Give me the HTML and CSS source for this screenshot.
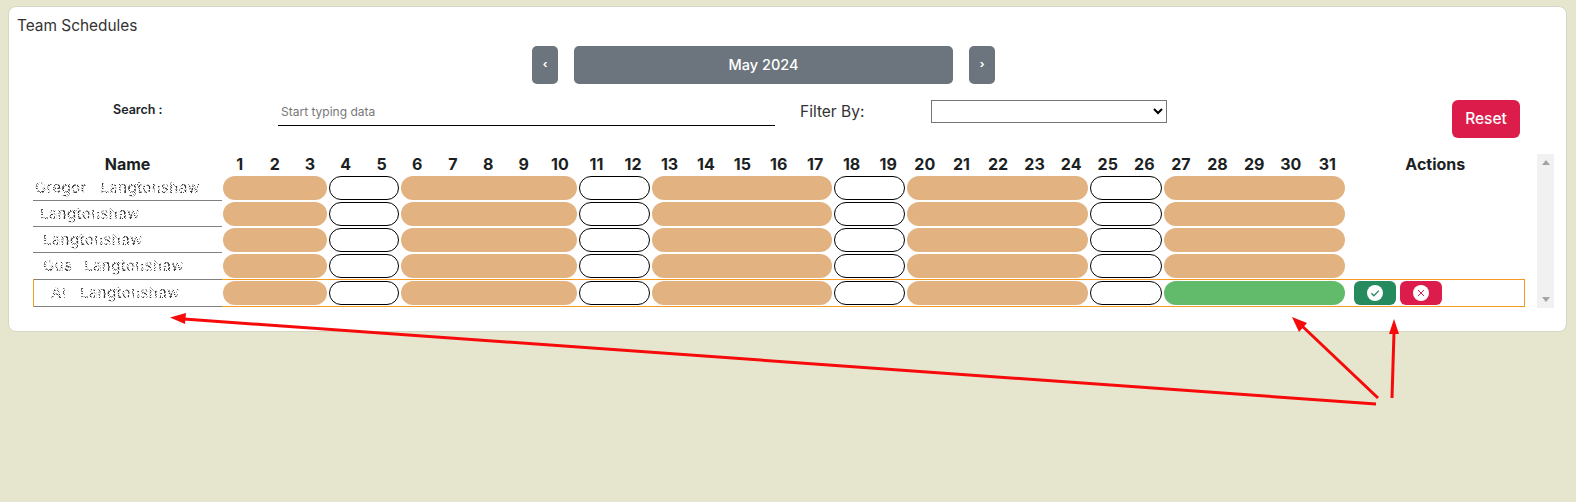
FILE: index.html
```html
<!DOCTYPE html>
<html lang="en">
<head>
  <meta charset="UTF-8">
  <meta name="viewport" content="width=device-width, initial-scale=1.0">
  <title>Team Schedules</title>
  <link rel="stylesheet" href="styles.css">
</head>
<body>
  <!-- dotted noise used on the redacted names -->
  <svg class="defs" width="0" height="0" aria-hidden="true">
    <filter id="speckle" x="0" y="0" width="100%" height="100%">
      <feMorphology in="SourceGraphic" operator="dilate" radius="0.4" result="fat"/>
      <feTurbulence type="fractalNoise" baseFrequency="1.3" numOctaves="1" seed="7" result="noise"/>
      <feColorMatrix in="noise" type="matrix" values="0 0 0 0 0  0 0 0 0 0  0 0 0 0 0  0 0 0 -10 5.4" result="dots"/>
      <feComposite in="fat" in2="dots" operator="in"/>
    </filter>
  </svg>

  <div class="card">
    <div class="card-title">Team Schedules</div>

    <div class="month-nav">
      <button class="btn-gray btn-step">&#8249;</button>
      <button class="btn-gray btn-month">May 2024</button>
      <button class="btn-gray btn-step">&#8250;</button>
    </div>

    <div class="filters">
      <label class="search-label">Search :</label>
      <input class="search-input" type="text" placeholder="Start typing data">
      <label class="filter-label">Filter By:</label>
      <select class="filter-select"><option></option></select>
      <button class="btn-reset">Reset</button>
    </div>

    <div class="schedule">
      <div class="schedule-table">
        <div class="sched-row head-row">
          <div class="head-name">Name</div>
          <div>1</div><div>2</div><div>3</div><div>4</div><div>5</div><div>6</div><div>7</div><div>8</div>
          <div>9</div><div>10</div><div>11</div><div>12</div><div>13</div><div>14</div><div>15</div><div>16</div>
          <div>17</div><div>18</div><div>19</div><div>20</div><div>21</div><div>22</div><div>23</div><div>24</div>
          <div>25</div><div>26</div><div>27</div><div>28</div><div>29</div><div>30</div><div>31</div>
          <div>Actions</div>
        </div>

        <div class="sched-row first-row">
          <div class="name-cell name-a"><span class="blur-name">Gregor</span><span class="blur-name gap-a">Langtonshaw</span></div>
          <div class="pill work span-3"></div>
          <div class="pill off span-2"></div>
          <div class="pill work span-5"></div>
          <div class="pill off span-2"></div>
          <div class="pill work span-5"></div>
          <div class="pill off span-2"></div>
          <div class="pill work span-5"></div>
          <div class="pill off span-2"></div>
          <div class="pill work span-5"></div>
        </div>

        <div class="sched-row">
          <div class="name-cell name-b"><span class="blur-name">Langtonshaw</span></div>
          <div class="pill work span-3"></div>
          <div class="pill off span-2"></div>
          <div class="pill work span-5"></div>
          <div class="pill off span-2"></div>
          <div class="pill work span-5"></div>
          <div class="pill off span-2"></div>
          <div class="pill work span-5"></div>
          <div class="pill off span-2"></div>
          <div class="pill work span-5"></div>
        </div>

        <div class="sched-row">
          <div class="name-cell name-c"><span class="blur-name">Langtonshaw</span></div>
          <div class="pill work span-3"></div>
          <div class="pill off span-2"></div>
          <div class="pill work span-5"></div>
          <div class="pill off span-2"></div>
          <div class="pill work span-5"></div>
          <div class="pill off span-2"></div>
          <div class="pill work span-5"></div>
          <div class="pill off span-2"></div>
          <div class="pill work span-5"></div>
        </div>

        <div class="sched-row">
          <div class="name-cell name-c"><span class="blur-name">Gus</span><span class="blur-name gap-b">Langtonshaw</span></div>
          <div class="pill work span-3"></div>
          <div class="pill off span-2"></div>
          <div class="pill work span-5"></div>
          <div class="pill off span-2"></div>
          <div class="pill work span-5"></div>
          <div class="pill off span-2"></div>
          <div class="pill work span-5"></div>
          <div class="pill off span-2"></div>
          <div class="pill work span-5"></div>
        </div>

        <div class="sched-row selected">
          <div class="name-cell name-d"><span class="blur-name">Al</span><span class="blur-name gap-c">Langtonshaw</span></div>
          <div class="pill work span-3"></div>
          <div class="pill off span-2"></div>
          <div class="pill work span-5"></div>
          <div class="pill off span-2"></div>
          <div class="pill work span-5"></div>
          <div class="pill off span-2"></div>
          <div class="pill work span-5"></div>
          <div class="pill off span-2"></div>
          <div class="pill approved span-5"></div>
          <div class="actions">
            <button class="btn-action btn-approve">
              <svg width="16" height="16" viewBox="0 0 16 16"><circle cx="8" cy="8" r="8" fill="#fff"/><path d="M4.4 8.300l2.500 2.500 4.900-5.200" fill="none" stroke="#258a5d" stroke-width="1.300"/></svg>
            </button>
            <button class="btn-action btn-reject">
              <svg width="16" height="16" viewBox="0 0 16 16"><circle cx="8" cy="8" r="8" fill="#fff"/><path d="M5 5l6 6M11 5l-6 6" fill="none" stroke="#dc1c4a" stroke-width="1"/></svg>
            </button>
          </div>
        </div>
      </div>

      <div class="fake-scroll">
        <span class="arrow-up"></span>
        <span class="arrow-down"></span>
      </div>
    </div>
  </div>

  <!-- annotation arrows drawn over the screenshot -->
  <svg class="annotations" width="1576" height="502" viewBox="0 0 1576 502">
    <g stroke="#f60a0a" stroke-width="3" fill="none">
      <path d="M1376 404L184 319"/>
      <path d="M1378 398L1301 325"/>
      <path d="M1392 398L1394 332"/>
    </g>
    <g fill="#f60a0a">
      <path d="M170 317.500L186 313L185 324z"/>
      <path d="M1292 317L1307 323L1299 332z"/>
      <path d="M1394 319L1399 334L1389 334z"/>
    </g>
  </svg>
</body>
</html>
```

FILE: styles.css
```css
html, body {
  margin: 0;
  padding: 0;
}

body {
  font-family: Inter, 'Liberation Sans', sans-serif;
  background: #e6e6cf;
  color: #212529;
  min-height: 502px;
  position: relative;
  overflow: hidden;
}

.defs {
  position: absolute;
}

.annotations {
  position: absolute;
  top: 0;
  left: 0;
  pointer-events: none;
}

.card {
  margin: 6px 9px 0 8px;
  box-sizing: border-box;
  height: 326px;
  background: #fff;
  border: 1px solid #d6d6c4;
  border-radius: 8px;
  padding: 9px 12px 0 8px;
}

.card-title {
  font-size: 15.400px;
  line-height: 20px;
  color: #333;
}

.month-nav {
  display: flex;
  padding-left: 515px;
  margin-top: 10px;
}

button {
  font-family: inherit;
  border: none;
  color: #fff;
}

.btn-gray {
  background: #6c757d;
  border-radius: 5px;
  height: 38px;
}

.btn-step {
  width: 26px;
  font-size: 11px;
  font-weight: 700;
  padding: 0 0 3px;
}

.btn-month {
  width: 379px;
  margin: 0 16px;
  padding: 0 0 2px;
  font-size: 14.500px;
  font-weight: 500;
}

.filters {
  display: flex;
  align-items: flex-start;
  margin-top: 16px;
}

.search-label {
  margin-left: 96px;
  width: 165px;
  font-size: 12.500px;
  font-weight: 600;
  line-height: 20px;
}

.search-input {
  box-sizing: border-box;
  width: 497px;
  height: 26px;
  border: none;
  border-bottom: 1.5px solid #000;
  padding: 0 3px 2px;
  font-family: inherit;
  font-size: 12px;
  outline: none;
}

.search-input::placeholder {
  color: #777;
}

.filter-label {
  margin-left: 25px;
  width: 131px;
  font-size: 15.500px;
  line-height: 24px;
  color: #333;
}

.filter-select {
  width: 236px;
  height: 23px;
  background: #fff;
}

.btn-reset {
  margin-left: 285px;
  width: 68px;
  height: 38px;
  padding: 0 0 2px;
  background: #dc1c4a;
  border-radius: 6px;
  font-size: 15.500px;
  font-weight: 500;
}

.schedule {
  display: flex;
  margin-top: 15px;
  padding-left: 16px;
}

.schedule-table {
  width: 1492px;
}

.fake-scroll {
  margin-left: 12px;
  width: 17px;
  height: 154px;
  margin-top: 1px;
  background: #f1f1f1;
  display: flex;
  flex-direction: column;
  align-items: center;
  justify-content: space-between;
  padding: 6px 0;
  box-sizing: border-box;
}

.arrow-up {
  border: 4px solid transparent;
  border-top: none;
  border-bottom: 5px solid #a3a3a3;
}

.arrow-down {
  border: 4px solid transparent;
  border-bottom: none;
  border-top: 5px solid #a3a3a3;
}

.sched-row {
  --days: repeat(3, 35.2px) repeat(2, 36px) repeat(4, 35.5px) repeat(3, 36.6px) repeat(5, 36.4px) repeat(14, 36.6px);
  display: grid;
  grid-template-columns: 189px var(--days) 1fr;
  height: 26px;
}

.head-row {
  box-sizing: border-box;
  height: 21px;
  padding-top: 1px;
  font-size: 16px;
  font-weight: 700;
  line-height: 21px;
  text-align: center;
  color: #1c1f23;
}

.name-cell {
  box-sizing: border-box;
  border-top: 1px solid #808080;
  display: flex;
  align-items: center;
  overflow: hidden;
}

.first-row .name-cell {
  border-top-color: transparent;
}

.name-a { padding-left: 2px; }
.name-b { padding-left: 7px; }
.name-c { padding-left: 10px; }
.name-d { padding-left: 17px; }

.blur-name {
  font-size: 15px;
  font-weight: 500;
  letter-spacing: 0.3px;
  line-height: 20px;
  color: #333;
  filter: url(#speckle);
}

.gap-a { margin-left: 14px; }
.gap-b { margin-left: 12px; }
.gap-c { margin-left: 14px; }

.pill {
  box-sizing: border-box;
  height: 24px;
  margin: 2px 1px 0;
  border-radius: 12px;
}

.work { background: #e2b380; }
.approved { background: #62bb6a; }
.off {
  background: #fff;
  border: 1.5px solid #000;
}

.span-2 { grid-column: span 2; }
.span-3 { grid-column: span 3; }
.span-5 { grid-column: span 5; }

.selected {
  box-sizing: border-box;
  height: 28px;
  margin-top: 1px;
  border: 1px solid #f59a23;
  grid-template-columns: 188px var(--days) 1fr;
}

.selected .name-cell {
  margin: -1px 0;
  border-bottom: 1px solid #808080;
}

.selected .pill {
  margin-top: 1px;
}

.actions {
  display: flex;
  gap: 4px;
  margin: 1px 0 0 8px;
}

.btn-action {
  width: 42px;
  height: 24px;
  padding: 0;
  border-radius: 6px;
  display: flex;
  align-items: center;
  justify-content: center;
}

.btn-approve { background: #258a5d; }
.btn-reject { background: #dc1c4a; }
```
